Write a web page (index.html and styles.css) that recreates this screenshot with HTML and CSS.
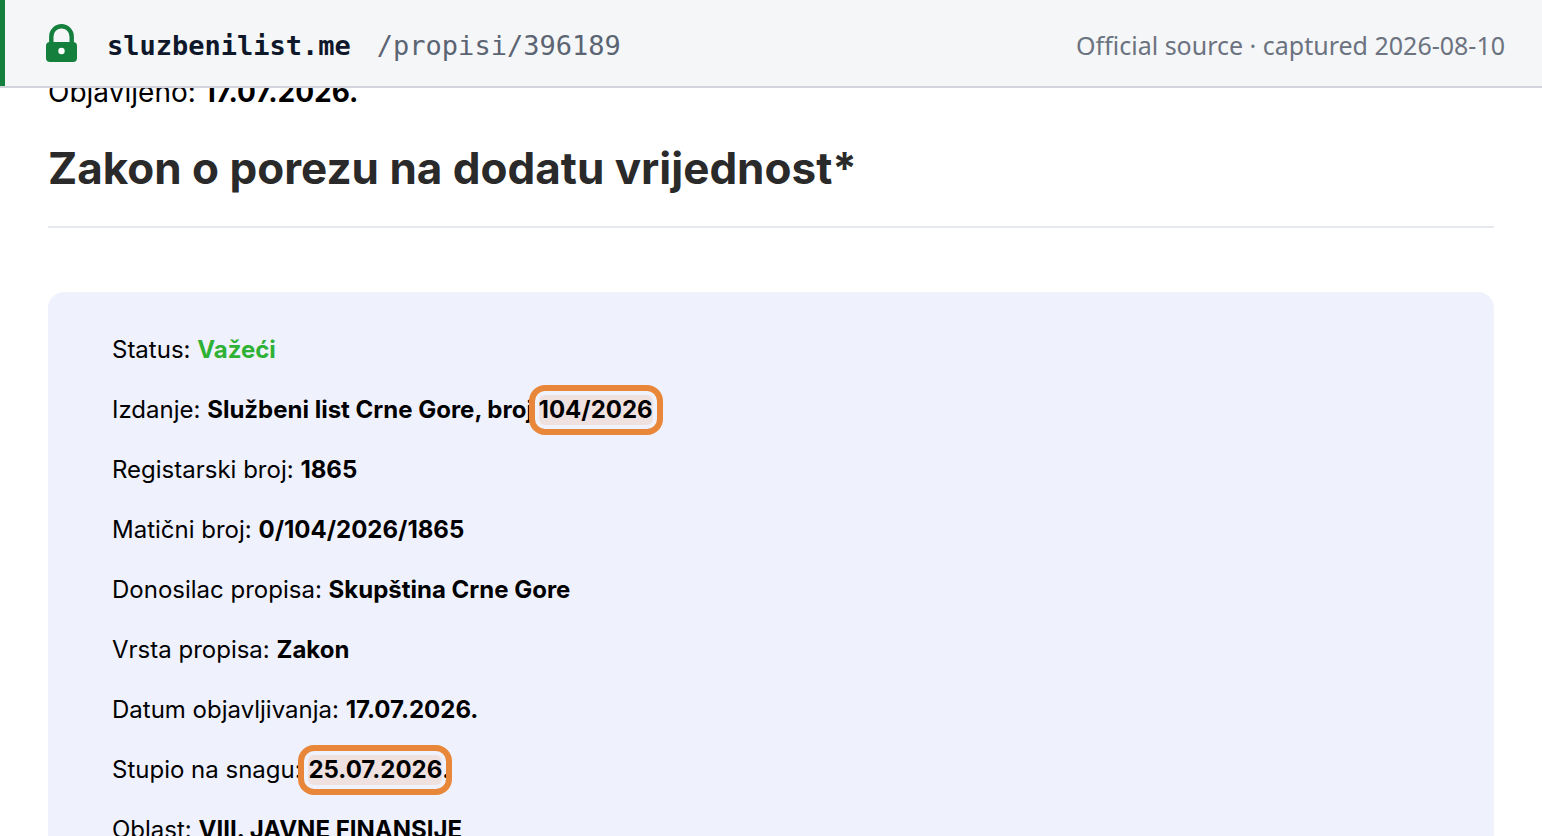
FILE: index.html
```
<!DOCTYPE html>
<html lang="sr-Latn-ME">
<head>
  <meta charset="UTF-8">
  <title>Zakon o porezu na dodatu vrijednost</title>
  <link rel="stylesheet" href="styles.css">
</head>
<body>
  <header class="source-bar">
    <svg class="lock" viewBox="0 0 32 38" aria-hidden="true">
      <path d="M5.300 20V12.500a10.200 10.200 0 0 1 20.400 0V20" fill="none" stroke="#15803d" stroke-width="4.400"/>
      <rect x="0" y="18" width="31" height="20" rx="4" fill="#15803d"/>
      <circle cx="15.500" cy="27" r="3.200" fill="#fff"/>
    </svg>
    <span class="host">sluzbenilist.me</span>
    <span class="path">/propisi/396189</span>
    <span class="captured">Official source · captured 2026-08-10</span>
  </header>

  <main class="page">
    <p class="published">Objavljeno: <strong>17.07.2026.</strong></p>
    <h1>Zakon o porezu na dodatu vrijednost*</h1>

    <section class="details">
      <p>Status: <strong class="valid">Važeći</strong></p>
      <p>Izdanje: <strong>Službeni list Crne Gore, broj <mark>104/2026</mark></strong></p>
      <p>Registarski broj: <strong>1865</strong></p>
      <p>Matični broj: <strong>0/104/2026/1865</strong></p>
      <p>Donosilac propisa: <strong>Skupština Crne Gore</strong></p>
      <p>Vrsta propisa: <strong>Zakon</strong></p>
      <p>Datum objavljivanja: <strong>17.07.2026.</strong></p>
      <p>Stupio na snagu: <strong><mark>25.07.2026</mark>.</strong></p>
      <p>Oblast: <strong>VIII. JAVNE FINANSIJE</strong></p>
    </section>
  </main>
</body>
</html>
```
FILE: styles.css
```
* {
  box-sizing: border-box;
}
body {
  margin: 0;
  height: 100vh;
  overflow: hidden;
  display: flex;
  flex-direction: column;
  background-color: #fff;
  color: #000;
  font-family: Inter, sans-serif;
}
.source-bar {
  flex: none;
  display: flex;
  align-items: center;
  height: 88px;
  padding: 0 37px 0 46px;
  background-color: #f5f6f8;
  border-bottom: 2px solid #d1d5db;
  box-shadow: inset 5px 0 #15803d;
}
.lock {
  width: 32px;
  height: 38px;
  margin-right: 29px;
}
.host,
.path,
.captured {
  padding-top: 4px;
}
.host,
.path {
  font-family: "DejaVu Sans Mono", monospace;
  font-size: 27px;
}
.host {
  margin-right: 26px;
  color: #0f172a;
  font-weight: bold;
}
.path {
  color: #5b6472;
}
.captured {
  margin-left: auto;
  color: #6b7280;
  font-family: "Noto Sans", sans-serif;
  font-size: 25px;
}
.page {
  flex: 1;
  min-height: 0;
  overflow: hidden;
  padding: 0 48px;
}
.published {
  margin: -16px 0 30px;
  font-size: 28px;
  line-height: 40px;
}
h1 {
  margin: 0 0 64px;
  padding-bottom: 32px;
  border-bottom: 2px solid #e5e9ee;
  color: #2a2a2a;
  font-size: 44px;
  line-height: 52px;
}
.details {
  padding: 28px 64px;
  background-color: #eff1fd;
  border-radius: 16px;
}
.details p {
  margin: 0;
  font-size: 24px;
  line-height: 60px;
}
.valid {
  color: #2eb135;
}
mark {
  position: relative;
  display: inline-block;
  line-height: 30px;
  background-color: #efe1df;
  border-radius: 6px;
  color: inherit;
}
/* ring around the highlighted value */
mark::after {
  content: "";
  position: absolute;
  inset: -10px;
  border: 6px solid #e8873a;
  border-radius: 16px;
}
```
